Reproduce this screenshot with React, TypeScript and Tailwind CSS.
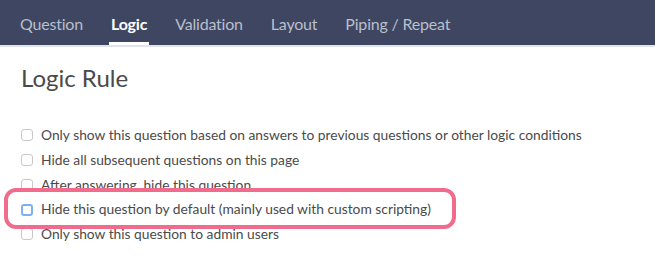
const tabs = ['Question', 'Logic', 'Validation', 'Layout', 'Piping / Repeat'];

const rules = [
  'Only show this question based on answers to previous questions or other logic conditions',
  'Hide all subsequent questions on this page',
  'After answering, hide this question',
  'Hide this question by default (mainly used with custom scripting)',
  'Only show this question to admin users',
];

export default function App() {
  return (
    <div className="w-[655px] h-[264px] bg-white overflow-hidden font-['Lato',sans-serif]">
      <div className="h-[47px] bg-[#3e4661] border-b-2 border-[#dfe3ee] flex items-end pl-[6px]">
        {tabs.map(t => (
          <div key={t} className="px-[14px] flex flex-col items-center">
            <span
              className={
                'text-[16px] leading-[20px] pb-[8px] tracking-[-0.2px] ' +
                (t === 'Logic' ? 'text-white font-bold' : 'text-[#b9bfcc]')
              }
            >
              {t}
            </span>
            <div className={'h-[3px] w-[calc(100%+4px)] ' + (t === 'Logic' ? 'bg-white' : 'bg-transparent')} />
          </div>
        ))}
      </div>

      <div className="px-[21px] pt-[15px]">
        <h2 className="text-[24px] leading-[32px] text-[#4a4a4a] font-normal">Logic Rule</h2>

        <div className="relative mt-[29px] flex flex-col">
          {rules.map((r, i) => (
            <label key={r} className="flex items-center gap-[8px] h-[24.75px] text-[13.8px] text-[#4a4a4a]">
              <span
                className={
                  'w-[12px] h-[12px] rounded-[3px] border bg-white shrink-0 ' +
                  (i === 3 ? 'border-[#7fb2ec] border-2' : 'border-[#c9c9c9]')
                }
              />
              {r}
            </label>
          ))}
          <div className="absolute left-[-17px] top-[65px] w-[452px] h-[41px] rounded-[12px] border-4 border-[#f06b8c]" />
        </div>
      </div>
    </div>
  );
}
